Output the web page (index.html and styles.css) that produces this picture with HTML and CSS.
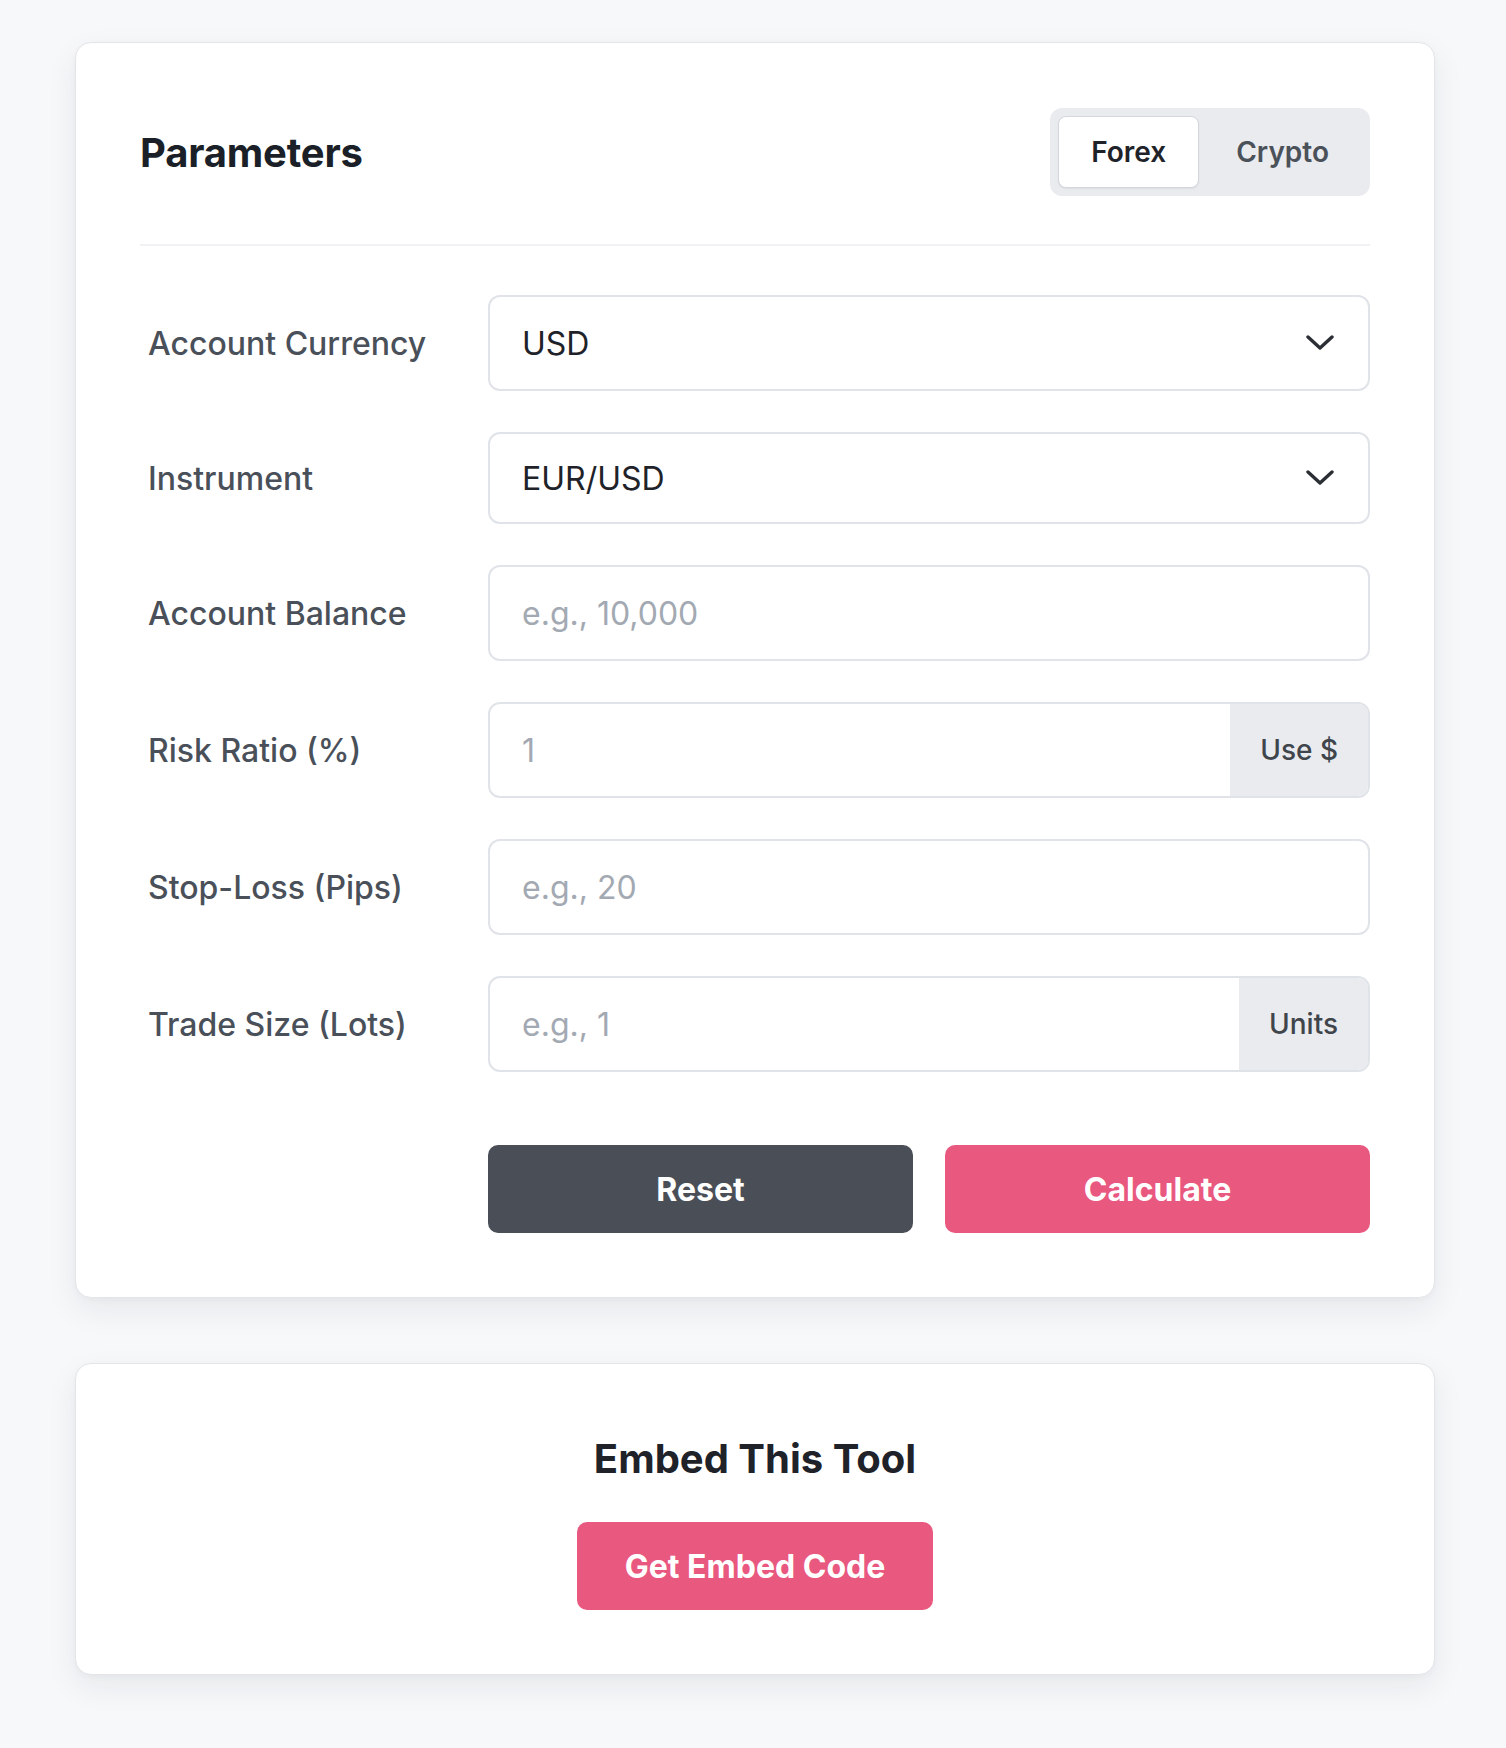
FILE: index.html
```html
<!DOCTYPE html>
<html lang="en">
<head>
<meta charset="utf-8">
<title>Parameters</title>
<link rel="stylesheet" href="styles.css">
</head>
<body>
<main class="page">
  <section class="card params">
    <header class="params-head">
      <h2 class="title">Parameters</h2>
      <div class="toggle">
        <button class="toggle-btn active">Forex</button>
        <button class="toggle-btn">Crypto</button>
      </div>
    </header>
    <div class="form">
      <div class="row">
        <label class="label">Account Currency</label>
        <div class="field select">
          <span class="value">USD</span>
          <svg class="chev" viewBox="0 0 28 16" width="28" height="16"><path d="M2 2 L14 13 L26 2" fill="none" stroke="#2b2f35" stroke-width="3.4" stroke-linecap="round" stroke-linejoin="round"/></svg>
        </div>
      </div>
      <div class="row">
        <label class="label">Instrument</label>
        <div class="field select short">
          <span class="value">EUR/USD</span>
          <svg class="chev" viewBox="0 0 28 16" width="28" height="16"><path d="M2 2 L14 13 L26 2" fill="none" stroke="#2b2f35" stroke-width="3.4" stroke-linecap="round" stroke-linejoin="round"/></svg>
        </div>
      </div>
      <div class="row">
        <label class="label">Account Balance</label>
        <div class="field"><span class="placeholder">e.g., 10,000</span></div>
      </div>
      <div class="row">
        <label class="label">Risk Ratio (%)</label>
        <div class="field group">
          <span class="placeholder grow">1</span>
          <span class="addon">Use $</span>
        </div>
      </div>
      <div class="row">
        <label class="label">Stop-Loss (Pips)</label>
        <div class="field"><span class="placeholder">e.g., 20</span></div>
      </div>
      <div class="row">
        <label class="label">Trade Size (Lots)</label>
        <div class="field group">
          <span class="placeholder grow">e.g., 1</span>
          <span class="addon">Units</span>
        </div>
      </div>
      <div class="row actions">
        <span></span>
        <div class="buttons">
          <button class="btn btn-dark">Reset</button>
          <button class="btn btn-pink">Calculate</button>
        </div>
      </div>
    </div>
  </section>
  <section class="card embed">
    <h2 class="embed-title">Embed This Tool</h2>
    <button class="btn btn-pink embed-btn">Get Embed Code</button>
  </section>
</main>
</body>
</html>
```
FILE: styles.css
```css
* { box-sizing: border-box; }
html, body { margin: 0; padding: 0; }
body {
  background: #f7f8fa;
  font-family: Inter, "Noto Sans", "Liberation Sans", sans-serif;
  color: #1f2329;
}
.page {
  width: 1360px;
  margin: 42px 0 0 75px;
  display: flex;
  flex-direction: column;
  gap: 65px;
  padding-bottom: 76px;
}
.card {
  background: #fff;
  border: 1px solid #e3e5e9;
  border-radius: 16px;
  box-shadow: 0 12px 32px rgba(17, 24, 39, 0.07), 0 2px 6px rgba(17, 24, 39, 0.03);
  padding: 64px;
}
.params { padding-bottom: 64px; }
.params-head {
  display: flex;
  align-items: center;
  justify-content: space-between;
  padding-top: 1px;
  padding-bottom: 48px;
  border-bottom: 2px solid #f1f2f4;
}
.title {
  margin: 0;
  font-size: 40px;
  font-weight: 700;
  color: #1b1f27;
  letter-spacing: -0.2px;
}
.toggle {
  display: flex;
  gap: 4px;
  background: #eaebef;
  border-radius: 12px;
  padding: 8px;
  height: 88px;
}
.toggle-btn {
  font-family: inherit;
  font-size: 28px;
  font-weight: 600;
  color: #4b5159;
  background: transparent;
  border: 1px solid transparent;
  border-radius: 8px;
  padding: 0 32px;
  height: 72px;
}
.toggle-btn.active {
  background: #fff;
  color: #1f2329;
  border-color: #d3d6db;
  box-shadow: 0 1px 2px rgba(0,0,0,0.06);
}
.form {
  display: flex;
  flex-direction: column;
  gap: 41px;
  padding-top: 49px;
}
.row {
  display: grid;
  grid-template-columns: 348px 1fr;
  align-items: center;
}
.label {
  padding-left: 8px;
  font-size: 32px;
  font-weight: 500;
  color: #4a5059;
}
.field {
  height: 96px;
  border: 2px solid #e0e3e8;
  border-radius: 12px;
  display: flex;
  align-items: center;
  padding: 0 32px;
  font-size: 32px;
  overflow: hidden;
}
.field.short { height: 92px; }
.select { justify-content: space-between; padding-right: 34px; }
.value { color: #1f2329; }
.chev { display: block; }
.placeholder { color: #a3a9b2; }
.group { padding-right: 0; }
.grow { flex: 1; }
.addon {
  align-self: stretch;
  display: flex;
  align-items: center;
  background: #e9ebef;
  padding: 0 30px 0 30px;
  font-size: 28px;
  font-weight: 500;
  color: #40454c;
}
.actions { margin-top: 32px; }
.buttons {
  display: grid;
  grid-template-columns: 1fr 1fr;
  gap: 32px;
}
.btn {
  font-family: inherit;
  height: 88px;
  border: none;
  border-radius: 10px;
  font-size: 32px;
  font-weight: 700;
  color: #fff;
}
.btn-dark { background: #4a4f57; }
.btn-pink { background: #e9587f; }
.embed {
  display: flex;
  flex-direction: column;
  align-items: center;
  padding-top: 65px;
}
.embed-title {
  margin: 0 0 33px;
  font-size: 40px;
  line-height: 60px;
  font-weight: 700;
  color: #1f2329;
}
.embed-btn { padding: 0 48px; }
```
